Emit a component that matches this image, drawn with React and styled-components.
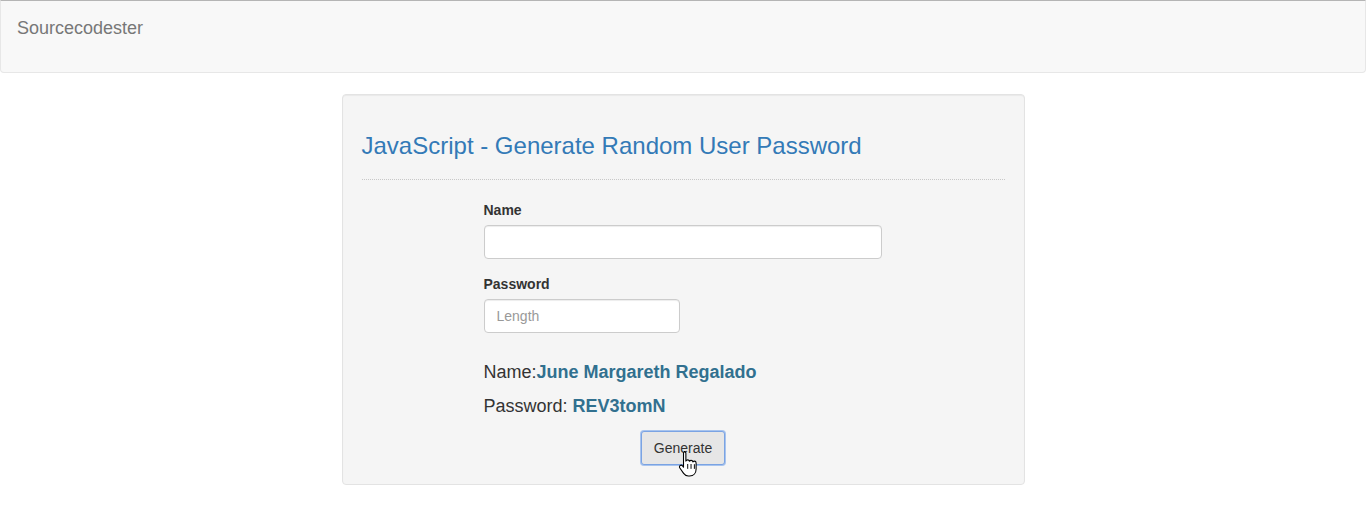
import React, {useState} from 'react';
import styled, {createGlobalStyle} from 'styled-components';

const GlobalStyle = createGlobalStyle`
  * {
    box-sizing: border-box;
  }
  body {
    margin: 0;
    background: #fff;
    font-family: "Liberation Sans", Arial, sans-serif;
    font-size: 14px;
    color: #333;
  }
`;

const Navbar = styled.nav`
  height: 73px;
  background-color: #f8f8f8;
  border: 1px solid #e7e7e7;
  border-top-color: #b5b5b5;
  border-radius: 0 0 4px 4px;
  padding: 0 16px;
  margin-bottom: 21px;
`;

const Brand = styled.a`
  display: block;
  font-size: 18px;
  line-height: 20px;
  padding-top: 17px;
  color: #777;
  text-decoration: none;
`;

const Well = styled.div`
  width: 683px;
  margin: 0 auto;
  background-color: #f5f5f5;
  border: 1px solid #e3e3e3;
  border-radius: 4px;
  padding: 19px;
  box-shadow: inset 0 1px 1px rgba(0, 0, 0, 0.05);
`;

const Title = styled.h3`
  font-size: 24px;
  font-weight: 500;
  line-height: 26px;
  margin: 19px 0 0;
  color: #337ab7;
`;

const Divider = styled.hr`
  border: 0;
  border-top: 1px dotted #c8c8c8;
  margin: 20px 0 20px;
`;

const Form = styled.div`
  padding-left: 122px;
  display: flex;
  flex-direction: column;
`;

const FormGroup = styled.div`
  margin-bottom: ${(p) => p.$mb || 15}px;
`;

const Label = styled.label`
  display: block;
  font-weight: bold;
  font-size: 14px;
  line-height: 20px;
  margin-bottom: 5px;
`;

const Input = styled.input`
  display: block;
  width: ${(p) => p.$width}px;
  height: 34px;
  padding: 6px 12px;
  font-family: inherit;
  font-size: 14px;
  color: #555;
  background: #fff;
  border: 1px solid #ccc;
  border-radius: 4px;
  box-shadow: inset 0 1px 1px rgba(0, 0, 0, 0.075);

  &::placeholder {
    color: #999;
  }
`;

const Results = styled.div`
  margin-top: 7px;
`;

const ResultLine = styled.div`
  font-size: 18px;
  line-height: 34px;
  color: #333;
`;

const Value = styled.span`
  font-weight: bold;
  color: #31708f;
`;

const ButtonRow = styled.div`
  display: flex;
  justify-content: center;
  margin-top: 8px;
  margin-left: -122px;
`;

const ButtonWrap = styled.div`
  position: relative;
`;

const Button = styled.button`
  height: 34px;
  padding: 6px 12px;
  font-family: inherit;
  font-size: 14px;
  color: #333;
  background-color: #e6e6e6;
  border: 1px solid #7aa3e3;
  box-shadow: 0 0 0 1px #a8c4ee;
  border-radius: 3px;
  cursor: pointer;
`;

const Cursor = styled.svg`
  position: absolute;
  left: 37px;
  top: 19px;
  pointer-events: none;
`;

const HandCursor = () => (
  <Cursor width="22" height="28" viewBox="0 0 20 26">
    <path
      d="M5.5 1.5c1 0 1.6.7 1.6 1.6v7.2c.3-.7 1-1.1 1.7-1.1.9 0 1.5.6 1.6 1.3.3-.6.9-.9 1.6-.9.9 0 1.5.6 1.6 1.4.3-.4.8-.7 1.4-.7 1 0 1.6.7 1.6 1.7v5.6c0 3.6-2.2 6.5-6 6.5H9.3c-2 0-3.2-.9-4.3-2.4l-3.5-5c-.6-.8-.4-1.8.3-2.3.7-.5 1.6-.3 2.2.4l.9 1.2V3.1c0-.9.6-1.6 1.6-1.6z"
      fill="#fff"
      stroke="#000"
      strokeWidth="1"
      strokeLinejoin="round"
    />
    <path d="M8.8 13v4.5M11.9 13v4.5M15 13.2v4.3" stroke="#000" strokeWidth="0.9" />
  </Cursor>
);

const App = () => {
  const [name] = useState('June Margareth Regalado');
  const [password] = useState('REV3tomN');

  return (
    <>
      <GlobalStyle />
      <Navbar>
        <Brand href="#">Sourcecodester</Brand>
      </Navbar>
      <Well>
        <Title>JavaScript - Generate Random User Password</Title>
        <Divider />
        <Form>
          <FormGroup>
            <Label>Name</Label>
            <Input type="text" $width={398} />
          </FormGroup>
          <FormGroup $mb={0}>
            <Label>Password</Label>
            <Input type="number" placeholder="Length" $width={196} />
          </FormGroup>
          <Results>
            <ResultLine>
              Name:<Value>{name}</Value>
            </ResultLine>
            <ResultLine>
              Password: <Value>{password}</Value>
            </ResultLine>
          </Results>
          <ButtonRow>
            <ButtonWrap>
              <Button>Generate</Button>
              <HandCursor />
            </ButtonWrap>
          </ButtonRow>
        </Form>
      </Well>
    </>
  );
};

export default App;
